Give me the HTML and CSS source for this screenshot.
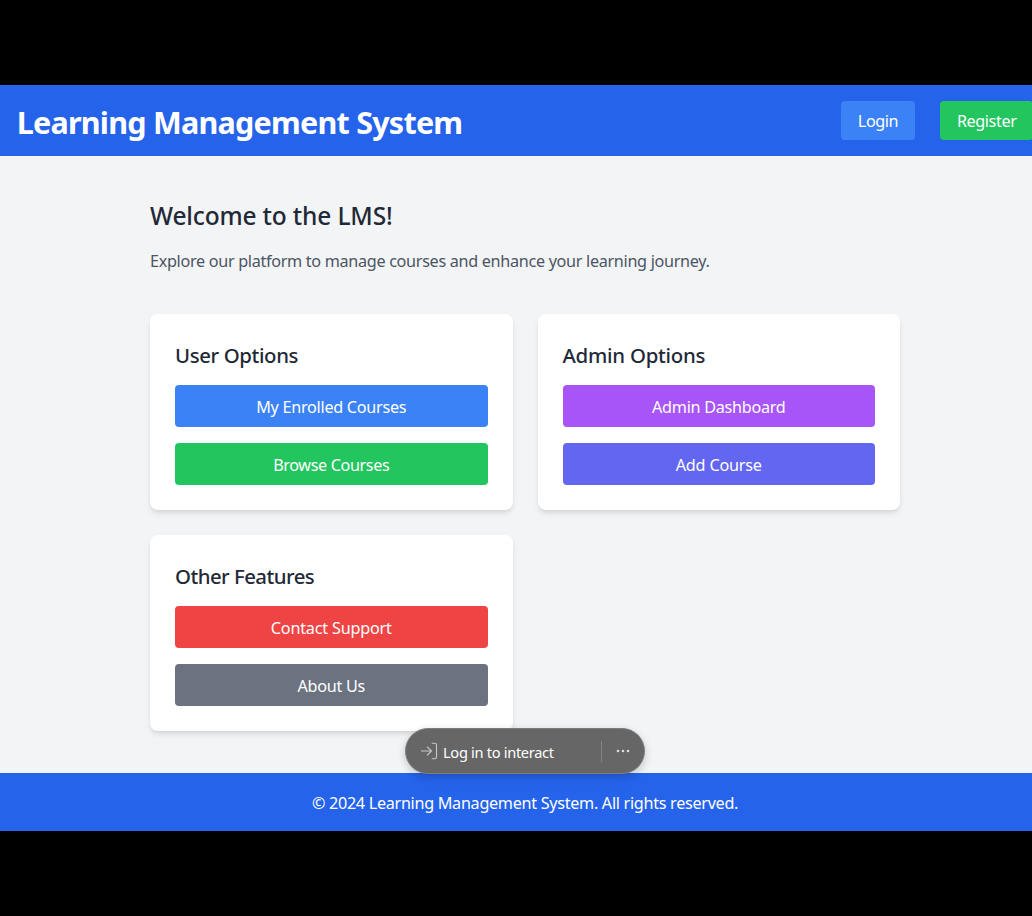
FILE: index.html
```html
<!DOCTYPE html>
<html lang="en">
<head>
<meta charset="utf-8">
<title>Learning Management System</title>
<link rel="stylesheet" href="styles.css">
</head>
<body>
<div class="page">
  <header class="header">
    <h1 class="brand"><span>Learning Management System</span></h1>
    <nav class="nav">
      <a class="nav-btn login"><span>Login</span></a>
      <a class="nav-btn register"><span>Register</span></a>
    </nav>
  </header>
  <main class="main">
    <h2 class="welcome"><span>Welcome to the LMS!</span></h2>
    <p class="intro"><span>Explore our platform to manage courses and enhance your learning journey.</span></p>
    <div class="cards">
      <section class="card">
        <h3 class="card-title"><span class="t-user">User Options</span></h3>
        <a class="btn blue"><span class="t-enrolled">My Enrolled Courses</span></a>
        <a class="btn green"><span class="t-browse">Browse Courses</span></a>
      </section>
      <section class="card">
        <h3 class="card-title"><span class="t-admin">Admin Options</span></h3>
        <a class="btn purple"><span class="t-dashboard">Admin Dashboard</span></a>
        <a class="btn indigo"><span class="t-add">Add Course</span></a>
      </section>
      <section class="card">
        <h3 class="card-title"><span class="t-other">Other Features</span></h3>
        <a class="btn red"><span class="t-contact">Contact Support</span></a>
        <a class="btn gray"><span class="t-about">About Us</span></a>
      </section>
    </div>
  </main>
  <footer class="footer"><span>© 2024 Learning Management System. All rights reserved.</span></footer>
  <div class="pill">
    <svg class="pill-icon" viewBox="0 0 18 18" width="18" height="18"><path d="M1 9h10.5M7 4.7 11.5 9 7 13.3M11.7 1.2h3.1c1 0 1.7.7 1.7 1.7v12.2c0 1-.7 1.7-1.7 1.7h-3.1"/></svg>
    <span class="pill-text">Log in to interact</span>
    <span class="pill-divider"></span>
    <svg class="pill-dots" viewBox="0 0 14 4" width="14" height="4"><circle cx="2" cy="2" r="1.3"/><circle cx="7" cy="2" r="1.3"/><circle cx="12" cy="2" r="1.3"/></svg>
  </div>
</div>
</body>
</html>
```
FILE: styles.css
```css
* { box-sizing: border-box; }
html { overflow: hidden; background: #000; }
body {
  margin: 0;
  padding: 85px 0;
  height: 916px;
  overflow: hidden;
  background: #000;
  font-family: "Noto Sans", "Open Sans", sans-serif;
  font-size: 16.2px;
  line-height: 25px;
}
h1, h2, h3, p { margin: 0; }
.page {
  position: relative;
  display: flex;
  flex-direction: column;
  width: 1050px;
  height: 746px;
  background: #f3f4f6;
}
.header {
  display: flex;
  flex: none;
  align-items: center;
  justify-content: space-between;
  height: 70.7px;
  padding: 0 16.7px;
  background: #2563eb;
  color: #fff;
}
.brand { font-size: 30.5px; font-weight: 700; line-height: 37px; padding-top: 4px; letter-spacing: -0.76px; }
.nav { display: flex; gap: 25px; }
.nav-btn {
  display: flex;
  align-items: center;
  justify-content: center;
  height: 39px;
  padding-top: 3px;
  border-radius: 4px;
  letter-spacing: -0.4px;
}
.login { width: 74px; background: #3b82f6; }
.register { width: 93.3px; background: #22c55e; }
.main { flex: 1; width: 750px; margin: 0 auto; padding-top: 42px; }
.welcome { font-size: 24.5px; font-weight: 500; line-height: 33px; padding-top: 1px; letter-spacing: -0.16px; color: #1f2937; }
.intro { margin-top: 17.3px; letter-spacing: -0.31px; color: #4b5563; }
.cards { display: grid; grid-template-columns: 1fr 1fr; gap: 25px; margin-top: 40px; }
.card {
  height: 196px;
  padding: 25px;
  border-radius: 8px;
  background: #fff;
  box-shadow: 0 4px 6px -1px rgba(0,0,0,.1), 0 2px 4px -2px rgba(0,0,0,.1);
}
.card-title { font-size: 20.4px; font-weight: 500; line-height: 29px; height: 29px; padding-top: 2px; margin-bottom: 17px; color: #1f2937; }
.btn {
  display: flex;
  align-items: center;
  justify-content: center;
  height: 41.7px;
  padding-top: 3px;
  border-radius: 4px;
  color: #fff;
}
.btn + .btn { margin-top: 16.6px; }
.blue { background: #3b82f6; }
.green { background: #22c55e; }
.purple { background: #a855f7; }
.indigo { background: #6366f1; }
.red { background: #ef4444; }
.gray { background: #6b7280; }
.t-user { letter-spacing: -0.38px; }
.t-admin { letter-spacing: -0.25px; }
.t-other { letter-spacing: -0.54px; }
.t-enrolled { letter-spacing: -0.27px; }
.t-browse { letter-spacing: -0.38px; }
.t-dashboard { letter-spacing: -0.28px; }
.t-add, .t-contact { letter-spacing: -0.2px; }
.t-about { letter-spacing: -0.25px; }
.footer {
  display: flex;
  flex: none;
  align-items: center;
  justify-content: center;
  height: 58.3px;
  padding-top: 3px;
  background: #2563eb;
  color: #fff;
  letter-spacing: -0.3px;
}
/* Floating prompt above the page */
.pill {
  position: absolute;
  left: 405px;
  top: 643px;
  display: flex;
  align-items: center;
  width: 240px;
  height: 46px;
  padding: 0 14px 0 14px;
  border: 1px solid #7d7d7d;
  border-radius: 23px;
  background: #666;
  color: #fff;
  box-shadow: 0 3px 8px rgba(0,0,0,.2);
}
.pill-icon { flex: none; fill: none; stroke: #c8c8c8; stroke-width: 1.1; }
.pill-text { margin-left: 5px; padding-top: 2px; font-size: 14.6px; letter-spacing: -0.3px; white-space: nowrap; }
.pill-divider { width: 1px; height: 21px; margin-left: auto; background: #858585; }
.pill-dots { margin: 0 0 0 14px; fill: #ddd; }
```
